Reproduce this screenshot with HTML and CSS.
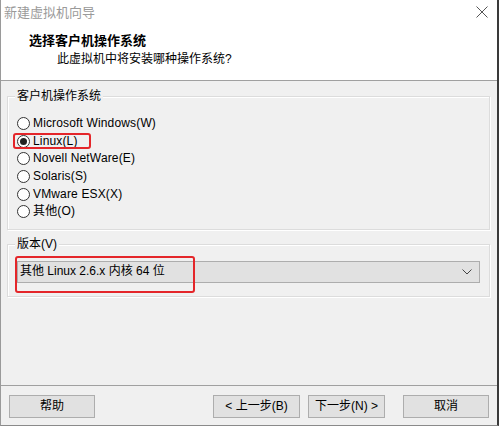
FILE: index.html
```html
<!DOCTYPE html>
<html lang="zh-CN">
<head>
<meta charset="utf-8">
<title>新建虚拟机向导</title>
<link rel="stylesheet" href="styles.css">
</head>
<body>
<div class="window">
  <div class="titlebar">
    <span class="title">新建虚拟机向导</span>
    <svg class="close" width="12" height="12" viewBox="0 0 12 12"><path d="M0.5 0.5 L11.5 11.5 M11.5 0.5 L0.5 11.5" stroke="#555" stroke-width="1" fill="none"/></svg>
  </div>
  <div class="header">
    <div class="h-title">选择客户机操作系统</div>
    <div class="h-sub">此虚拟机中将安装哪种操作系统?</div>
  </div>
  <div class="content">
    <div class="group group-os">
      <div class="group-label">客户机操作系统</div>
      <ul class="radios">
        <li class="radio"><span class="dot"></span>Microsoft Windows(W)</li>
        <li class="radio checked"><span class="dot"></span>Linux(L)<span class="mark mark-linux"></span></li>
        <li class="radio"><span class="dot"></span>Novell NetWare(E)</li>
        <li class="radio"><span class="dot"></span>Solaris(S)</li>
        <li class="radio"><span class="dot"></span>VMware ESX(X)</li>
        <li class="radio"><span class="dot"></span>其他(O)</li>
      </ul>
    </div>
    <div class="group group-ver">
      <div class="group-label">版本(V)</div>
      <div class="select">
        <span>其他 Linux 2.6.x 内核 64 位</span>
        <svg class="chev" width="10" height="6" viewBox="0 0 10 6"><path d="M0.5 0.5 L5 5 L9.5 0.5" stroke="#444" stroke-width="1" fill="none"/></svg>
        <span class="mark mark-select"></span>
      </div>
    </div>
  </div>
  <div class="footer">
    <button class="btn btn-help">帮助</button>
    <div class="nav">
      <button class="btn btn-prev">&lt; 上一步(B)</button>
      <button class="btn btn-next">下一步(N) &gt;</button>
      <button class="btn btn-cancel">取消</button>
    </div>
  </div>
</div>
</body>
</html>
```
FILE: styles.css
```css
* { box-sizing: border-box; }
html, body { margin: 0; padding: 0; }
body {
  width: 499px;
  height: 426px;
  overflow: hidden;
  font-family: "Liberation Sans", "Noto Sans CJK SC", sans-serif;
  font-size: 12px;
  line-height: 17px;
  color: #000;
  background: #fff;
}
.window {
  width: 499px;
  height: 426px;
  border-left: 1px solid #9a9a9a;
  border-right: 2px solid #3a3a3a;
  border-bottom: 1px solid #8a8a8a;
  display: flex;
  flex-direction: column;
  background: #f0f0f0;
}
.titlebar {
  height: 29px;
  background: #fff;
  display: flex;
  align-items: center;
  justify-content: space-between;
  padding: 0 9px 4px 3px;
}
.title {
  color: #9a9a9a;
  font-size: 13px;
}
.close { display: block; margin-top: -1px; }
.header {
  height: 52px;
  background: #fff;
  border-bottom: 1px solid #a0a0a0;
  padding-top: 3px;
}
.h-title {
  font-weight: bold;
  font-size: 13px;
  line-height: 17px;
  padding-left: 28px;
}
.h-sub {
  font-size: 12px;
  line-height: 17px;
  padding-left: 56px;
  margin-top: 2px;
}
.content {
  padding: 15px 7px 0 6px;
  height: 305px;
  border-bottom: 1px solid #a0a0a0;
}
.group {
  border: 1px solid #dcdcdc;
  box-shadow: inset 1px 1px 0 #fff, 1px 1px 0 #fff;
  position: relative;
}
.group-label {
  display: block;
  width: max-content;
  margin: -9px 0 0 7px;
  padding: 0 2px;
  line-height: 17px;
  height: 17px;
  background: #f0f0f0;
}
.radios {
  list-style: none;
  margin: 0;
  padding: 10px 0 8px 9px;
}
.radio {
  height: 17.6px;
  display: flex;
  align-items: center;
  position: relative;
  line-height: 17px;
  letter-spacing: 0.15px;
}
.dot {
  width: 13px;
  height: 13px;
  border: 1px solid #333;
  border-radius: 50%;
  background: #fff;
  margin-right: 3px;
  display: flex;
  align-items: center;
  justify-content: center;
  flex: none;
}
.checked .dot::after {
  content: "";
  width: 7px;
  height: 7px;
  border-radius: 50%;
  background: #222;
}
.group-ver {
  margin-top: 14px;
  padding: 0 9px 13px 9px;
}
.group-ver .group-label { margin-left: -2px; }
.select {
  margin-top: 8px;
  height: 22px;
  background: #e1e1e1;
  border: 1px solid #adadad;
  display: flex;
  align-items: center;
  justify-content: space-between;
  padding: 0 7px 0 2px;
  position: relative;
}
.chev { display: block; }
.mark {
  position: absolute;
  border: 2px solid #e4262a;
  border-radius: 3px;
  pointer-events: none;
}
.mark-linux {
  left: -4px;
  top: 0px;
  width: 78px;
  height: 16px;
}
.mark-select {
  left: -3px;
  top: -6px;
  width: 180px;
  height: 37px;
}
.footer {
  flex: 1;
  display: flex;
  align-items: flex-start;
  justify-content: space-between;
  padding: 9px 8px 0 8px;
}
.nav { display: flex; }
.btn {
  font: inherit;
  font-size: 12px;
  height: 23px;
  background: #e1e1e1;
  border: 1px solid #adadad;
  border-radius: 0;
  color: #000;
  padding: 0;
  margin: 0;
}
.btn-help { width: 86px; }
.btn-prev { width: 87px; }
.btn-next { width: 77px; margin-left: 8px; }
.btn-cancel { width: 86px; margin-left: 18px; }
```
